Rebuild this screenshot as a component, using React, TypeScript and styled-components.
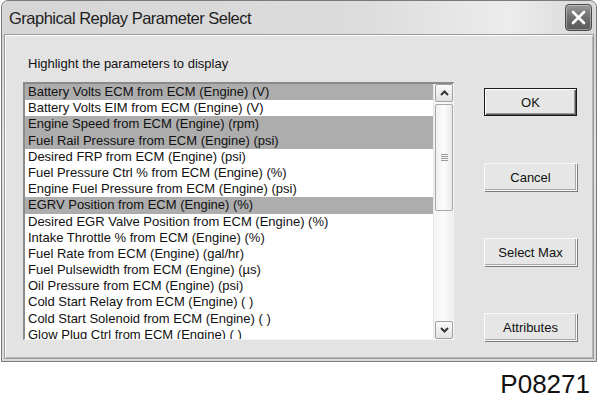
import * as React from 'react'
import styled, { createGlobalStyle } from 'styled-components'

const GlobalStyle = createGlobalStyle`
  html, body {
    margin: 0;
    padding: 0;
    background: #ffffff;
  }
  body {
    font-family: "Liberation Sans", Arial, sans-serif;
    color: #111;
  }
`

const Page = styled.div`
  width: 600px;
  height: 400px;
  display: flex;
  flex-direction: column;
  background: #ffffff;
  overflow: hidden;
`

const Window = styled.div`
  width: 596px;
  height: 365px;
  margin-left: 1px;
  border: 1px solid #7a7a7a;
  border-radius: 7px 7px 0 0;
  background: linear-gradient(180deg, #cfcfcf 0%, #e2e2e2 40%, #dadada 100%);
  display: flex;
  flex-direction: column;
  box-sizing: border-box;
`

const TitleBar = styled.div`
  height: 33px;
  display: flex;
  align-items: center;
  justify-content: space-between;
  padding: 0 4px 0 7px;
  background: linear-gradient(90deg, #d6d6d6 0%, #dcdcdc 60%, #ececec 85%, #d8d8d8 100%);
  border-radius: 6px 6px 0 0;
`

const Title = styled.span`
  font-family: "Liberation Sans", Arial, sans-serif;
  font-size: 16.5px;
  letter-spacing: -0.5px;
  color: #1e1e1e;
  padding-top: 1px;
`

const CloseButton = styled.div`
  width: 25px;
  height: 25px;
  border-radius: 4px;
  border: 1px solid #4a4a4a;
  background: linear-gradient(180deg, #9a9a9a 0%, #6e6e6e 50%, #5a5a5a 100%);
  display: flex;
  align-items: center;
  justify-content: center;
  box-shadow: inset 0 0 0 1px rgba(255, 255, 255, 0.35);
`

const Client = styled.div`
  flex: 1;
  margin: 0 2px 2px 2px;
  border: 1px solid #9a9a9a;
  box-shadow: inset 1px 1px 0 #ffffff, inset -1px -1px 0 #b8b8b8;
  background: #e3e3e3;
  display: flex;
  align-items: flex-start;
  padding-left: 18px;
`

const LeftCol = styled.div`
  display: flex;
  flex-direction: column;
  padding-top: 21px;
`

const Label = styled.div`
  font-size: 13px;
  line-height: 16px;
  padding-left: 5px;
  margin-bottom: 10px;
`

const ListBox = styled.div`
  width: 431px;
  height: 258px;
  box-sizing: border-box;
  border-top: 2px solid #8a8a8a;
  border-left: 2px solid #8a8a8a;
  border-right: 1px solid #f4f4f4;
  border-bottom: 1px solid #f4f4f4;
  background: #ffffff;
  display: flex;
  overflow: hidden;
`

const Items = styled.div`
  flex: 1;
  overflow: hidden;
`

const Item = styled.div<{ $selected?: boolean }>`
  height: 16.2px;
  line-height: 16px;
  font-size: 13px;
  padding-left: 3px;
  white-space: nowrap;
  background: ${p => (p.$selected ? '#adadad' : '#ffffff')};
  color: #111;
`

const ScrollBar = styled.div`
  width: 19px;
  display: flex;
  flex-direction: column;
  background: linear-gradient(90deg, #f2f2f2, #fbfbfb 50%, #eeeeee);
  border-left: 1px solid #e6e6e6;
`

const ArrowButton = styled.div`
  width: 18px;
  height: 18px;
  box-sizing: border-box;
  border: 1px solid #a0a0a0;
  border-radius: 2px;
  background: linear-gradient(180deg, #fafafa, #e2e2e2);
  display: flex;
  align-items: center;
  justify-content: center;
  margin: 0 0 0 1px;
`

const Track = styled.div`
  flex: 1;
  display: flex;
  flex-direction: column;
  justify-content: space-between;
  padding: 2px 0 2px 0;
`

const Thumb = styled.div`
  width: 18px;
  height: 107px;
  margin-left: 1px;
  box-sizing: border-box;
  border: 1px solid #a8a8a8;
  border-radius: 2px;
  background: linear-gradient(90deg, #f0f0f0, #fdfdfd 50%, #e8e8e8);
  display: flex;
  align-items: center;
  justify-content: center;
`

const Grip = styled.div`
  width: 7px;
  height: 7px;
  background: repeating-linear-gradient(180deg, #9a9a9a 0 1px, transparent 1px 2px);
`

const RightCol = styled.div`
  display: flex;
  flex-direction: column;
  gap: 47px;
  padding-top: 53px;
  margin-left: 30px;
`

const Button = styled.div<{ $default?: boolean }>`
  width: 93px;
  height: 28px;
  box-sizing: border-box;
  display: flex;
  align-items: center;
  justify-content: center;
  font-size: 13px;
  color: #111;
  background: #e6e6e6;
  border: 1px solid ${p => (p.$default ? '#1a1a1a' : '#f8f8f8')};
  box-shadow: ${p =>
    p.$default
      ? 'inset 1px 1px 0 #ffffff, inset -1px -1px 0 #555, inset -2px -2px 0 #999'
      : '1px 1px 0 #7a7a7a, inset -1px -1px 0 #a8a8a8'};
`

const Caption = styled.div`
  align-self: flex-end;
  margin-right: 10px;
  margin-top: 7px;
  font-family: "Liberation Sans", Arial, sans-serif;
  font-size: 26px;
  color: #111;
`

const params: { name: string; selected?: boolean }[] = [
  { name: 'Battery Volts ECM from ECM (Engine) (V)', selected: true },
  { name: 'Battery Volts EIM from ECM (Engine) (V)' },
  { name: 'Engine Speed from ECM (Engine) (rpm)', selected: true },
  { name: 'Fuel Rail Pressure from ECM (Engine) (psi)', selected: true },
  { name: 'Desired FRP from ECM (Engine) (psi)' },
  { name: 'Fuel Pressure Ctrl % from ECM (Engine) (%)' },
  { name: 'Engine Fuel Pressure from ECM (Engine) (psi)' },
  { name: 'EGRV Position from ECM (Engine) (%)', selected: true },
  { name: 'Desired EGR Valve Position from ECM (Engine) (%)' },
  { name: 'Intake Throttle % from ECM (Engine) (%)' },
  { name: 'Fuel Rate from ECM (Engine) (gal/hr)' },
  { name: 'Fuel Pulsewidth from ECM (Engine) (µs)' },
  { name: 'Oil Pressure from ECM (Engine) (psi)' },
  { name: 'Cold Start Relay from ECM (Engine) ( )' },
  { name: 'Cold Start Solenoid from ECM (Engine) ( )' },
  { name: 'Glow Plug Ctrl from ECM (Engine) ( )' },
]

const Caret: React.FC<{ down?: boolean }> = ({ down }) => (
  <svg width="9" height="6" viewBox="0 0 9 6">
    <path
      d={down ? 'M1 1 L4.5 4.5 L8 1' : 'M1 5 L4.5 1.5 L8 5'}
      fill="none"
      stroke="#333"
      strokeWidth="2"
    />
  </svg>
)

export default function App() {
  return (
    <Page>
      <GlobalStyle />
      <Window>
        <TitleBar>
          <Title>Graphical Replay Parameter Select</Title>
          <CloseButton>
            <svg width="15" height="15" viewBox="0 0 15 15">
              <path d="M2 2 L13 13 M13 2 L2 13" stroke="#ffffff" strokeWidth="2.6" strokeLinecap="round" />
            </svg>
          </CloseButton>
        </TitleBar>
        <Client>
          <LeftCol>
            <Label>Highlight the parameters to display</Label>
            <ListBox>
              <Items>
                {params.map(p => (
                  <Item key={p.name} $selected={p.selected}>
                    {p.name}
                  </Item>
                ))}
              </Items>
              <ScrollBar>
                <ArrowButton>
                  <Caret />
                </ArrowButton>
                <Track>
                  <Thumb>
                    <Grip />
                  </Thumb>
                </Track>
                <ArrowButton>
                  <Caret down />
                </ArrowButton>
              </ScrollBar>
            </ListBox>
          </LeftCol>
          <RightCol>
            <Button $default>OK</Button>
            <Button>Cancel</Button>
            <Button>Select Max</Button>
            <Button>Attributes</Button>
          </RightCol>
        </Client>
      </Window>
      <Caption>P08271</Caption>
    </Page>
  )
}
